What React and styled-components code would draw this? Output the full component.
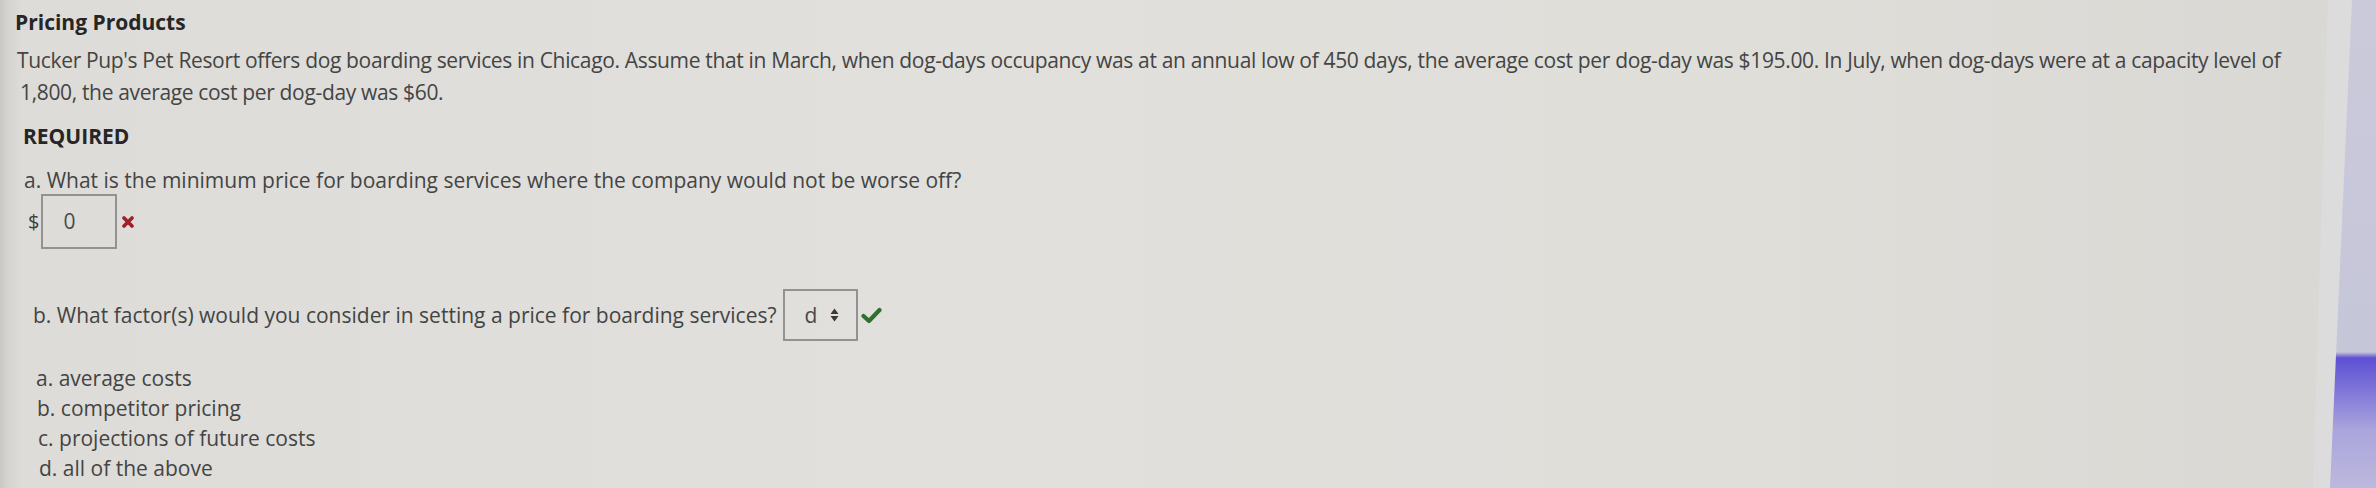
import React from "react";
import styled, { createGlobalStyle } from "styled-components";

const GlobalStyle = createGlobalStyle`
  body {
    margin: 0;
    background: #c8c8da;
    font-family: "Open Sans", "Liberation Sans", sans-serif;
  }
`;

const Screen = styled.div`
  width: 2376px;
  height: 488px;
  overflow: hidden;
  background: linear-gradient(
    to bottom,
    #cacadb 0,
    #c6c6d9 352px,
    #5d50d4 358px,
    #7a6fd8 385px,
    #aaa5dc 430px,
    #bcb9dd 488px
  );
`;

const Bezel = styled.div`
  width: 2352px;
  height: 100%;
  background: #dcdcdd;
  clip-path: polygon(0 0, 100% 0, calc(100% - 22px) 100%, 0 100%);
`;

const Page = styled.div`
  width: 2328px;
  height: 100%;
  box-sizing: border-box;
  padding-top: 8px;
  background: linear-gradient(
    to right,
    #c9c8c5 0,
    #d5d4d0 8px,
    #dddcd8 22px,
    #e1e0dc 40%,
    #dfded9 75%,
    #d9d8d4 100%
  );
  clip-path: polygon(0 0, 100% 0, calc(100% - 15px) 100%, 0 100%);
  color: #444444;
  font-size: 21px;
`;

const Title = styled.h2`
  margin: 0;
  padding-left: 15px;
  font-size: 21px;
  line-height: 28px;
  font-weight: 700;
  color: #262626;
`;

const Intro = styled.p`
  margin: 8px 0 0;
  padding-left: 20px;
  text-indent: -3px;
  max-width: 2310px;
  box-sizing: border-box;
  letter-spacing: -0.34px;
  line-height: 32px;
`;

const Heading = styled.div`
  margin-top: 12px;
  padding-left: 23px;
  line-height: 32px;
  font-weight: 700;
  color: #262626;
`;

const Question = styled.div`
  margin-top: 12px;
  padding-left: ${(p) => p.$indent}px;
  line-height: 32px;
`;

const AnswerRow = styled.div`
  display: flex;
  align-items: center;
  margin-top: ${(p) => p.$top}px;
  padding-left: ${(p) => p.$indent}px;
`;

const Currency = styled.span`
  font-size: 20px;
  color: #3e3e3e;
  margin-right: 2px;
`;

const AnswerBox = styled.div`
  display: flex;
  align-items: center;
  box-sizing: border-box;
  width: ${(p) => p.$w}px;
  height: ${(p) => p.$h}px;
  margin-left: ${(p) => p.$gap || 0}px;
  padding-left: 20px;
  border: 2px solid #929292;
  color: #4a4a4a;
`;

const BoxText = styled.span`
  line-height: 1;
`;

const SelectArrows = styled.svg`
  margin-left: 13px;
`;

const Mark = styled.svg`
  margin-left: ${(p) => p.$gap}px;
`;

const Options = styled.ol`
  list-style: none;
  margin: 22px 0 0;
  padding: 0;
`;

const Option = styled.li`
  line-height: 30px;
  padding-left: ${(p) => p.$indent}px;
`;

const options = [
  ["a. average costs", 36],
  ["b. competitor pricing", 37],
  ["c. projections of future costs", 38],
  ["d. all of the above", 39],
];

export default function App() {
  return (
    <>
      <GlobalStyle />
      <Screen>
        <Bezel>
          <Page>
            <Title>Pricing Products</Title>
            <Intro>
              Tucker Pup's Pet Resort offers dog boarding services in Chicago.
              Assume that in March, when dog-days occupancy was at an annual low
              of 450 days, the average cost per dog-day was $195.00. In July,
              when dog-days were at a capacity level of 1,800, the average cost
              per dog-day was $60.
            </Intro>
            <Heading>REQUIRED</Heading>
            <Question $indent={24}>
              a. What is the minimum price for boarding services where the
              company would not be worse off?
            </Question>
            <AnswerRow $top={-2} $indent={28}>
              <Currency>$</Currency>
              <AnswerBox $w={76} $h={55}>
                <BoxText>0</BoxText>
              </AnswerBox>
              <Mark $gap={5} width="12" height="12" viewBox="0 0 12 12">
                <path
                  d="M2 2 L10 10 M10 2 L2 10"
                  stroke="#a11f28"
                  strokeWidth="3.6"
                  strokeLinecap="round"
                />
              </Mark>
            </AnswerRow>
            <AnswerRow $top={40} $indent={33}>
              <span>
                b. What factor(s) would you consider in setting a price for
                boarding services?
              </span>
              <AnswerBox $w={75} $h={52} $gap={6}>
                <BoxText>d</BoxText>
                <SelectArrows width="9" height="16" viewBox="0 0 9 16">
                  <path d="M0.5 7 L4.5 1.5 L8.5 7 Z M0.5 9 L4.5 14.5 L8.5 9 Z" fill="#3a3a3a" />
                </SelectArrows>
              </AnswerBox>
              <Mark $gap={3} width="21" height="17" viewBox="0 0 21 17">
                <path
                  d="M2.5 9 L8 14 L18.5 3"
                  fill="none"
                  stroke="#336e31"
                  strokeWidth="4.2"
                  strokeLinecap="round"
                  strokeLinejoin="round"
                />
              </Mark>
            </AnswerRow>
            <Options>
              {options.map(([label, indent]) => (
                <Option key={label} $indent={indent}>
                  {label}
                </Option>
              ))}
            </Options>
          </Page>
        </Bezel>
      </Screen>
    </>
  );
}
